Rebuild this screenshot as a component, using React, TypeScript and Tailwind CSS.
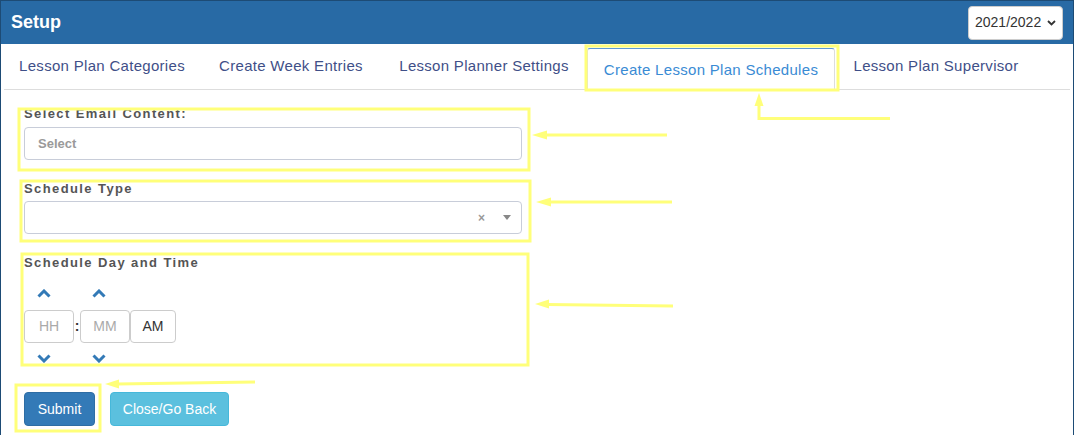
import React from "react";

// widths pin each tab to its place in the reference
const tabs = [
  { label: "Lesson Plan Categories", w: "w-[196px]" },
  { label: "Create Week Entries", w: "w-[182px]" },
  { label: "Lesson Planner Settings", w: "w-[204px]" },
  { label: "Create Lesson Plan Schedules", w: "w-[248px]", active: true },
  { label: "Lesson Plan Supervisor", w: "w-[200px]" },
];

function ChevronUp() {
  return (
    <svg width="14" height="9" viewBox="0 0 14 9" className="block">
      <polyline points="1.5,7.5 7,2 12.5,7.5" fill="none" stroke="#337ab7" strokeWidth="3" />
    </svg>
  );
}

function ChevronDown() {
  return (
    <svg width="14" height="9" viewBox="0 0 14 9" className="block">
      <polyline points="1.5,1.5 7,7 12.5,1.5" fill="none" stroke="#337ab7" strokeWidth="3" />
    </svg>
  );
}

// yellow markup drawn over the screenshot
function Annotations() {
  const c = "#ffff7a";
  return (
    <svg className="pointer-events-none absolute left-0 top-0" width="1077" height="435">
      <g fill="none" stroke={c} strokeWidth="3">
        <rect x="586" y="46" width="252" height="44" />
        <rect x="19" y="109" width="510" height="61" />
        <rect x="21" y="181" width="509" height="60" />
        <rect x="22" y="254" width="506" height="111" />
        <rect x="16" y="385" width="84" height="46" />
        <polyline points="890,118.5 759,118.5 759,104" />
        <line x1="667" y1="135" x2="545" y2="135" />
        <line x1="672" y1="202" x2="549" y2="202" />
        <line x1="673" y1="306" x2="547" y2="304.5" />
        <line x1="255" y1="382" x2="117" y2="384" />
      </g>
      <g fill={c}>
        <polygon points="759,93 754.5,106 763.5,106" />
        <polygon points="532,135 547,130.5 547,139.5" />
        <polygon points="536,202 551,197.5 551,206.5" />
        <polygon points="535,304 549,299.5 549,308.5" />
        <polygon points="105,384 119,379.5 119,388.5" />
      </g>
    </svg>
  );
}

export default function App() {
  return (
    <div className="relative h-[435px] w-[1077px] overflow-hidden bg-white font-['Liberation_Sans',Arial,sans-serif]">
      <div className="h-[500px] w-[1074px] border border-[#1d4b75] bg-white">
        <div className="flex h-[43px] items-center justify-between bg-[#286aa5] pl-[10px] pr-[10px]">
          <h1 className="text-[18px] font-bold text-white">Setup</h1>
          <div className="flex h-[34px] w-[95px] items-center justify-between rounded-[4px] border border-[#ccc] bg-white pl-[6px] pr-[6px] text-[14px] text-[#333]">
            <span>2021/2022</span>
            <svg width="9" height="6" viewBox="0 0 9 6">
              <polyline points="1,1 4.5,4.5 8,1" fill="none" stroke="#333" strokeWidth="1.8" />
            </svg>
          </div>
        </div>

        <ul className="mx-[3px] flex h-[46px] items-end border-b border-[#ddd] text-[15px] tracking-[0.3px]">
          {tabs.map((t) =>
            t.active ? (
              <li
                key={t.label}
                className={`${t.w} -mb-px mx-[1px] flex h-[42px] items-center justify-center rounded-t-[3px] border border-[#ddd] border-t-[#5c9ad6] border-b-white bg-white pt-[2px] text-[#3a8bd4]`}
              >
                {t.label}
              </li>
            ) : (
              <li key={t.label} className={`${t.w} flex h-[44px] items-center justify-center pb-[2px] text-[#3f4f88]`}>
                {t.label}
              </li>
            )
          )}
        </ul>

        <div className="px-[23px] pt-[16px]">
          <label className="block h-[16px] text-[13px] font-bold leading-[16px] tracking-[1.4px] text-[#555]">
            Select Email Content:
          </label>
          <div className="mt-[5px] flex h-[33px] w-[498px] items-center rounded-[4px] border border-[#c8cdd9] px-[13px] text-[13px] font-bold text-[#9a9a9a]">
            Select
          </div>

          <label className="mt-[21px] block h-[16px] text-[13px] font-bold leading-[16px] tracking-[1.4px] text-[#555]">
            Schedule Type
          </label>
          <div className="mt-[4px] flex h-[33px] w-[498px] items-center justify-end rounded-[4px] border border-[#c8cdd9] pr-[10px]">
            <span className="mr-[18px] text-[12px] font-bold text-[#999]">×</span>
            <svg width="8" height="5" viewBox="0 0 8 5">
              <polygon points="0,0 8,0 4,5" fill="#888" />
            </svg>
          </div>

          <label className="mt-[21px] block h-[16px] text-[13px] font-bold leading-[16px] tracking-[1.4px] text-[#555]">
            Schedule Day and Time
          </label>

          <div className="mt-[16px] flex flex-col">
            <div className="flex h-[12px] items-center">
              <div className="w-[56px] pl-[13px]">
                <ChevronUp />
              </div>
              <div className="pl-[12px]">
                <ChevronUp />
              </div>
            </div>
            <div className="mt-[11px] flex h-[33px] items-center text-[14px]">
              <div className="flex h-[33px] w-[50px] items-center justify-center rounded-[4px] border border-[#ccc] text-[#aaa]">
                HH
              </div>
              <span className="w-[6px] text-center font-bold text-[#333]">:</span>
              <div className="flex h-[33px] w-[50px] items-center justify-center rounded-[4px] border border-[#ccc] text-[#aaa]">
                MM
              </div>
              <div className="flex h-[33px] w-[46px] items-center justify-center rounded-[4px] border border-[#ccc] text-[#333]">
                AM
              </div>
            </div>
            <div className="mt-[9px] flex h-[12px] items-center">
              <div className="w-[56px] pl-[13px]">
                <ChevronDown />
              </div>
              <div className="pl-[12px]">
                <ChevronDown />
              </div>
            </div>
          </div>

          <div className="mt-[28px] flex gap-[15px] text-[14px] text-white">
            <button className="flex h-[34px] w-[71px] items-center justify-center rounded-[4px] border border-[#2e6da4] bg-[#337ab7]">
              Submit
            </button>
            <button className="flex h-[34px] w-[119px] items-center justify-center rounded-[4px] border border-[#46b8da] bg-[#5bc0de]">
              Close/Go Back
            </button>
          </div>
        </div>
      </div>
      <Annotations />
    </div>
  );
}
